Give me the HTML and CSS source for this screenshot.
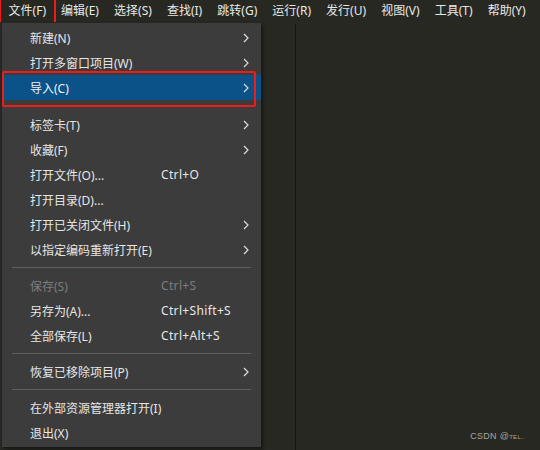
FILE: index.html
```html
<!DOCTYPE html>
<html lang="zh-CN">
<head>
<meta charset="utf-8">
<link rel="stylesheet" href="styles.css">
</head>
<body>
<div class="app">
  <nav class="menubar">
    <span class="mb-item marked">文件(F)</span>
    <span class="mb-item">编辑(E)</span>
    <span class="mb-item">选择(S)</span>
    <span class="mb-item">查找(I)</span>
    <span class="mb-item">跳转(G)</span>
    <span class="mb-item">运行(R)</span>
    <span class="mb-item">发行(U)</span>
    <span class="mb-item">视图(V)</span>
    <span class="mb-item">工具(T)</span>
    <span class="mb-item">帮助(Y)</span>
  </nav>
  <main class="workspace">
    <div class="sidebar"></div>
    <div class="editor"></div>
    <div class="watermark">CSDN @<span class="wm-small">TEL..</span></div>
  </main>

  <div class="dropdown">
    <div class="row"><span class="label">新建(N)</span><span class="key"></span><svg class="chev" viewBox="0 0 6 10"><polyline points="1,1 5,5 1,9"/></svg></div>
    <div class="row"><span class="label">打开多窗口项目(W)</span><span class="key"></span><svg class="chev" viewBox="0 0 6 10"><polyline points="1,1 5,5 1,9"/></svg></div>
    <div class="row active"><span class="label">导入(C)</span><span class="key"></span><svg class="chev" viewBox="0 0 6 10"><polyline points="1,1 5,5 1,9"/></svg></div>
    <div class="gap"></div>
    <div class="row"><span class="label">标签卡(T)</span><span class="key"></span><svg class="chev" viewBox="0 0 6 10"><polyline points="1,1 5,5 1,9"/></svg></div>
    <div class="row"><span class="label">收藏(F)</span><span class="key"></span><svg class="chev" viewBox="0 0 6 10"><polyline points="1,1 5,5 1,9"/></svg></div>
    <div class="row"><span class="label">打开文件(O)...</span><span class="key">Ctrl+O</span></div>
    <div class="row"><span class="label">打开目录(D)...</span><span class="key"></span></div>
    <div class="row"><span class="label">打开已关闭文件(H)</span><span class="key"></span><svg class="chev" viewBox="0 0 6 10"><polyline points="1,1 5,5 1,9"/></svg></div>
    <div class="row"><span class="label">以指定编码重新打开(E)</span><span class="key"></span><svg class="chev" viewBox="0 0 6 10"><polyline points="1,1 5,5 1,9"/></svg></div>
    <div class="sep"></div>
    <div class="row disabled"><span class="label">保存(S)</span><span class="key">Ctrl+S</span></div>
    <div class="row"><span class="label">另存为(A)...</span><span class="key">Ctrl+Shift+S</span></div>
    <div class="row"><span class="label">全部保存(L)</span><span class="key">Ctrl+Alt+S</span></div>
    <div class="sep"></div>
    <div class="row"><span class="label">恢复已移除项目(P)</span><span class="key"></span><svg class="chev" viewBox="0 0 6 10"><polyline points="1,1 5,5 1,9"/></svg></div>
    <div class="sep"></div>
    <div class="row"><span class="label">在外部资源管理器打开(I)</span><span class="key"></span></div>
    <div class="row"><span class="label">退出(X)</span><span class="key"></span></div>
  </div>
</div>
</body>
</html>
```
FILE: styles.css
```css
html, body {
  margin: 0;
  padding: 0;
  background: #272822;
}
body {
  font-family: "Noto Sans", "Noto Sans CJK SC", sans-serif;
  font-size: 12px;
  color: #e6e6e6;
}
.app {
  position: relative;
  width: 540px;
  height: 450px;
  overflow: hidden;
  display: flex;
  flex-direction: column;
}
.menubar {
  display: flex;
  height: 22px;
  align-items: center;
  padding-left: 1px;
  background: #272822;
  flex: none;
}
.mb-item {
  padding: 0 7.55px;
  height: 22px;
  line-height: 22px;
  white-space: nowrap;
  color: #e8e8e8;
}
.marked {
  outline: 2px solid #f01c1c;
  outline-offset: 0;
}
.workspace {
  flex: 1;
  display: flex;
  position: relative;
  padding-top: 2px;
  background: #272822;
}
.sidebar {
  width: 295px;
  flex: none;
  border-right: 1px solid #141512;
  background: #272822;
}
.editor {
  flex: 1;
  background: #272822;
}
.watermark {
  position: absolute;
  right: 15px;
  bottom: 9px;
  font-family: "Liberation Sans", "Noto Sans", sans-serif;
  font-size: 9px;
  color: #a5a5a5;
  letter-spacing: 0.3px;
}
.wm-small {
  font-size: 6px;
}
.dropdown {
  position: absolute;
  left: 2px;
  top: 23px;
  width: 259px;
  height: 424px;
  box-sizing: border-box;
  background: #3c3c3c;
  padding-top: 2px;
  box-shadow: 2px 2px 3px rgba(0, 0, 0, 0.45);
}
.row {
  position: relative;
  display: flex;
  align-items: center;
  height: 25px;
  padding-left: 28px;
  padding-right: 12px;
  white-space: nowrap;
}
.label {
  width: 131px;
  flex: none;
}
.key {
  flex: 1;
  font-family: "Noto Sans", sans-serif;
  letter-spacing: 0.35px;
}
.chev {
  width: 6px;
  height: 10px;
  fill: none;
  stroke: #dcdcdc;
  stroke-width: 1.2;
  flex: none;
}
.active {
  background: #0a5288;
  color: #f2f2f2;
}
.active::after {
  content: "";
  position: absolute;
  left: 0;
  right: 5px;
  top: -4px;
  bottom: -7px;
  border: 2px solid #f01c1c;
  border-radius: 2px;
}
.disabled {
  color: #7c7c7c;
}
.gap {
  height: 12px;
}
.sep {
  height: 11px;
  display: flex;
  align-items: center;
  padding: 0 10px;
}
.sep::before {
  content: "";
  flex: 1;
  height: 1px;
  background: #5f5f5f;
}
```
